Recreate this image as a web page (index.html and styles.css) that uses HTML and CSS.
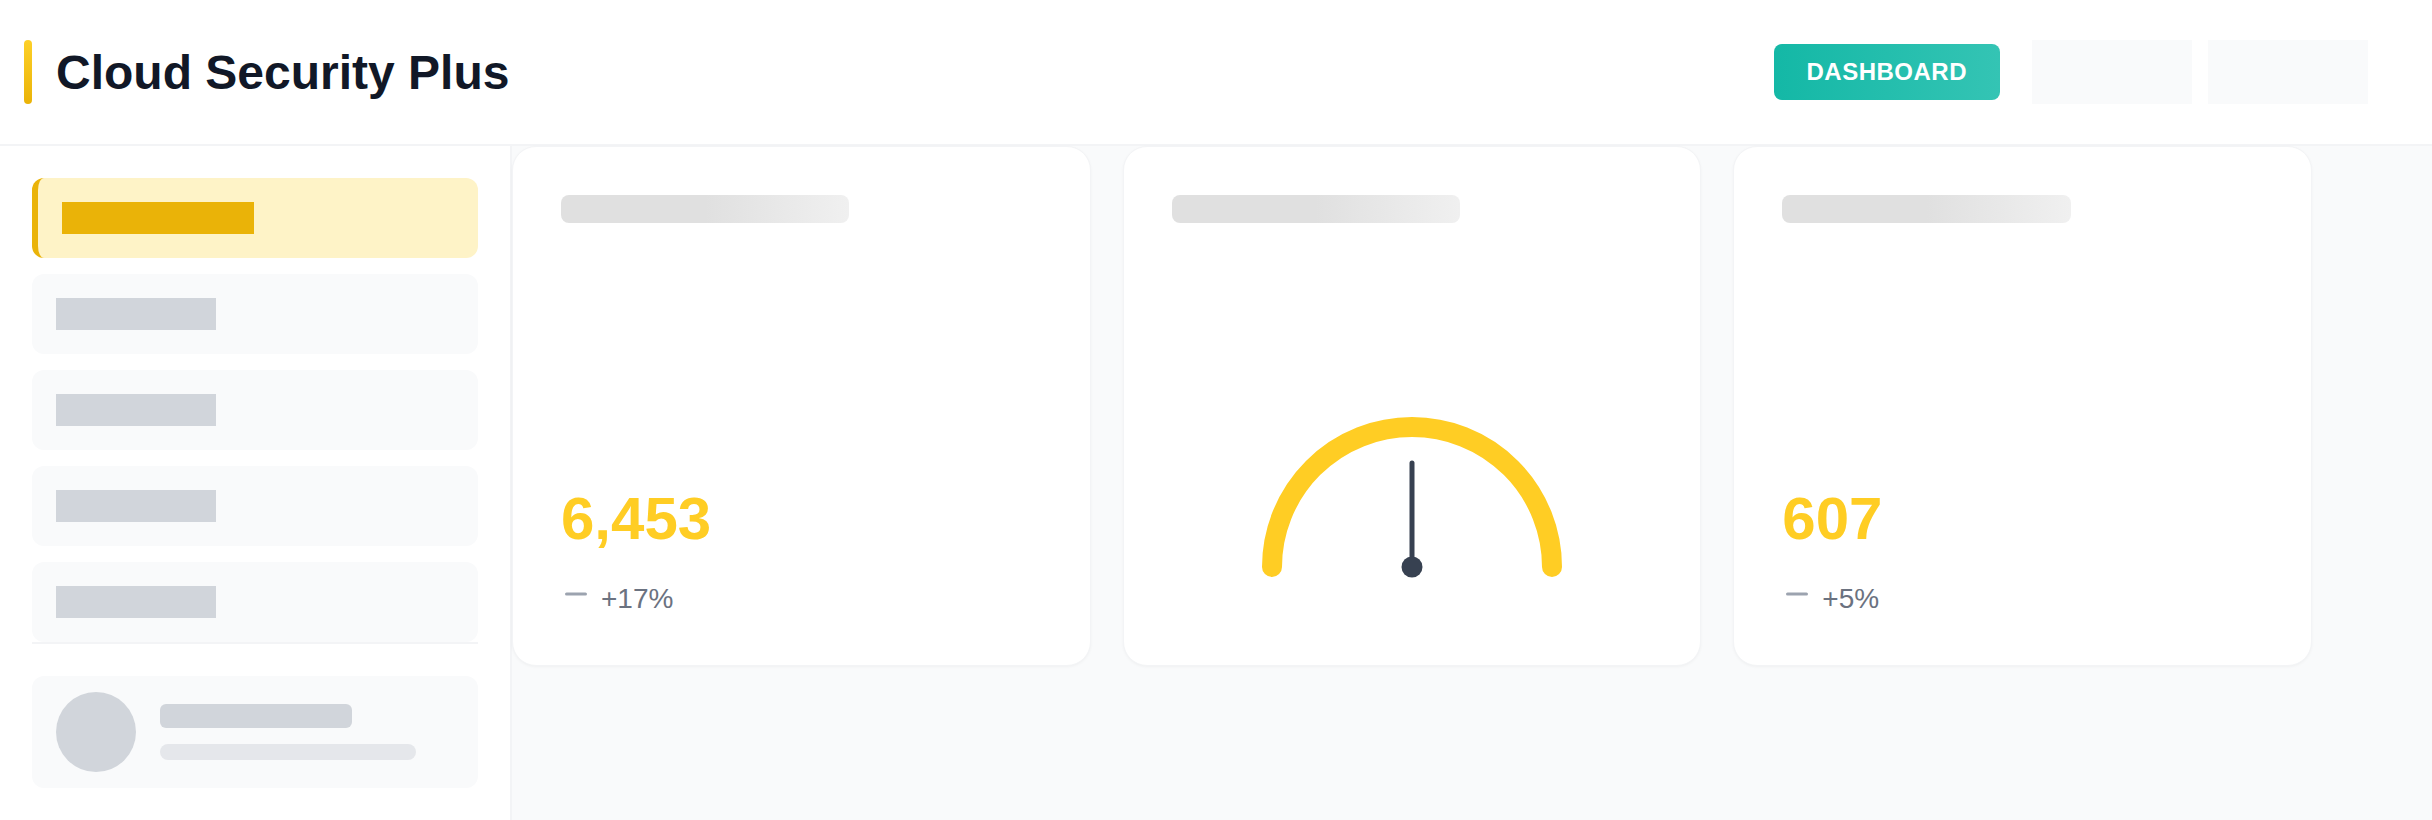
FILE: index.html
```html
<!DOCTYPE html>
<html lang="en">
<head>
  <meta charset="UTF-8">
  <meta name="viewport" content="width=device-width, initial-scale=1.0">
  <title>Cloud Security Plus</title>
  <link rel="stylesheet" href="styles.css">
</head>
<body>
  <header class="topbar">
    <div class="brand">
      <span class="brand-mark"></span>
      <h1 class="brand-title">Cloud Security Plus</h1>
    </div>
    <div class="topbar-actions">
      <button class="dash-btn">DASHBOARD</button>
      <div class="ghost-box"></div>
      <div class="ghost-box"></div>
    </div>
  </header>

  <div class="layout">
    <aside class="sidebar">
      <nav class="nav-list">
        <div class="nav-item active"><span class="nav-bar"></span></div>
        <div class="nav-item"><span class="nav-bar"></span></div>
        <div class="nav-item"><span class="nav-bar"></span></div>
        <div class="nav-item"><span class="nav-bar"></span></div>
        <div class="nav-item"><span class="nav-bar"></span></div>
      </nav>
      <div class="profile">
        <div class="avatar"></div>
        <div class="profile-lines">
          <span class="line-name"></span>
          <span class="line-sub"></span>
        </div>
      </div>
    </aside>

    <main class="content">
      <div class="card-grid">
        <div class="card">
          <div class="skeleton-title"></div>
          <div class="metric">
            <div class="metric-value">6,453</div>
            <div class="metric-delta">
              <svg class="delta-icon" width="28" height="24" viewBox="0 0 28 24">
                <line x1="5.5" y1="7" x2="24.5" y2="7" stroke="#9ca3af" stroke-width="3" stroke-linecap="round"/>
              </svg>
              <span>+17%</span>
            </div>
          </div>
        </div>

        <div class="card">
          <div class="skeleton-title"></div>
          <div class="gauge">
            <svg width="320" height="180" viewBox="0 0 320 180">
              <path d="M 20 160 A 140 140 0 0 1 300 160" fill="none" stroke="#ffcd24" stroke-width="20" stroke-linecap="round"/>
              <line x1="160" y1="160" x2="160" y2="56" stroke="#374151" stroke-width="5" stroke-linecap="round"/>
              <circle cx="160" cy="160" r="10.5" fill="#374151"/>
            </svg>
          </div>
        </div>

        <div class="card">
          <div class="skeleton-title"></div>
          <div class="metric">
            <div class="metric-value">607</div>
            <div class="metric-delta">
              <svg class="delta-icon" width="28" height="24" viewBox="0 0 28 24">
                <line x1="5.5" y1="7" x2="24.5" y2="7" stroke="#9ca3af" stroke-width="3" stroke-linecap="round"/>
              </svg>
              <span>+5%</span>
            </div>
          </div>
        </div>
      </div>
    </main>
  </div>
</body>
</html>
```

FILE: styles.css
```css
* {
  box-sizing: border-box;
}

body {
  margin: 0;
  height: 820px;
  overflow: hidden;
  background: #f9fafb;
  color: #111827;
  font-family: "Liberation Sans", Arial, sans-serif;
}

/* header */
.topbar {
  display: flex;
  align-items: center;
  justify-content: space-between;
  height: 146px;
  padding: 0 64px 0 24px;
  background: #ffffff;
  border-bottom: 2px solid #f3f4f6;
}

.brand {
  display: flex;
  align-items: center;
  gap: 24px;
}

.brand-mark {
  width: 8px;
  height: 64px;
  border-radius: 4px;
  background: linear-gradient(180deg, #fdd028, #eab308);
}

.brand-title {
  margin: 0;
  font-size: 48px;
  font-weight: bold;
  color: #111827;
}

.topbar-actions {
  display: flex;
  align-items: center;
}

.dash-btn {
  display: flex;
  align-items: center;
  height: 56px;
  padding: 0 33px;
  margin-right: 32px;
  border: none;
  border-radius: 8px;
  background: linear-gradient(90deg, #14b8a6, #34c4b4);
  color: #ffffff;
  font-family: inherit;
  font-size: 24px;
  font-weight: bold;
  letter-spacing: 0.5px;
  cursor: pointer;
}

.ghost-box {
  width: 160px;
  height: 64px;
  background: #f9fafb;
}

.ghost-box + .ghost-box {
  margin-left: 16px;
}

/* layout */
.layout {
  display: flex;
  height: 674px;
}

.sidebar {
  width: 512px;
  flex-shrink: 0;
  padding: 32px;
  background: #ffffff;
  border-right: 2px solid #f3f4f6;
}

.nav-list {
  display: flex;
  flex-direction: column;
  gap: 16px;
  border-bottom: 2px solid #f3f4f6;
}

.nav-item {
  height: 80px;
  padding: 24px;
  border-radius: 12px;
  background: #f9fafb;
}

.nav-bar {
  display: block;
  width: 160px;
  height: 32px;
  background: #d1d5db;
}

.nav-item.active {
  background: #fef3c7;
  border-left: 6px solid #eab308;
}

.nav-item.active .nav-bar {
  width: 192px;
  background: #eab308;
}

.profile {
  display: flex;
  align-items: center;
  gap: 24px;
  margin-top: 32px;
  padding: 16px 24px;
  border-radius: 12px;
  background: #f9fafb;
}

.avatar {
  width: 80px;
  height: 80px;
  border-radius: 50%;
  background: #d1d5db;
}

.profile-lines {
  display: flex;
  flex-direction: column;
  gap: 16px;
}

.line-name {
  width: 192px;
  height: 24px;
  border-radius: 6px;
  background: #d1d5db;
}

.line-sub {
  width: 256px;
  height: 16px;
  border-radius: 8px;
  background: #e5e7eb;
}

/* cards */
.content {
  flex: 1;
}

.card-grid {
  display: grid;
  grid-template-columns: repeat(3, 1fr);
  gap: 32px;
  max-width: 1800px;
}

.card {
  display: flex;
  flex-direction: column;
  height: 520px;
  padding: 48px;
  background: #ffffff;
  border: 1px solid #f3f4f6;
  border-radius: 24px;
  box-shadow: 0 1px 3px rgba(0, 0, 0, 0.04);
}

.skeleton-title {
  width: 60%;
  height: 28px;
  border-radius: 8px;
  background: linear-gradient(90deg, #e0e0e0 25%, #f0f0f0 50%, #e0e0e0 75%);
  background-size: 200% 100%;
}

.metric {
  margin-top: auto;
}

.metric-value {
  font-size: 60px;
  font-weight: bold;
  line-height: 1;
  color: #ffcd24;
  margin-bottom: 32px;
}

.metric-delta {
  display: flex;
  align-items: center;
  gap: 12px;
  height: 36px;
  font-size: 28px;
  line-height: 36px;
  color: #6b7280;
}

.delta-icon {
  display: block;
}

.gauge {
  display: flex;
  justify-content: center;
  margin-top: auto;
  padding-bottom: 30px;
}

.gauge svg {
  display: block;
}
```
